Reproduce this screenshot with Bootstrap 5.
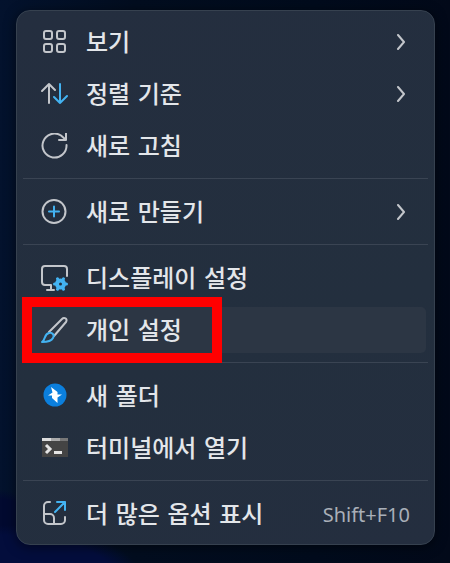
<!DOCTYPE html>
<html lang="ko">
<head>
<meta charset="utf-8">
<meta name="viewport" content="width=device-width, initial-scale=1">
<title>바탕 화면 메뉴</title>
<link href="https://cdn.jsdelivr.net/npm/bootstrap@5.3.0/dist/css/bootstrap.min.css" rel="stylesheet">
<style>
  body {
    background:
      radial-gradient(ellipse 140px 50px at 0 575px, #030d3c 0 80%, transparent 100%),
      radial-gradient(ellipse 60px 90px at 0 580px, #020a30 0 90%, transparent 100%),
      linear-gradient(90deg, #03122d 0, #020d1f 30%, #010b1c 70%, #020919 100%);
    min-height: 100vh;
    font-family: "DejaVu Sans", "Noto Sans CJK KR", sans-serif;
  }
  .desktop { padding: 10px 15px 18px 16px; }
  .context-menu {
    background: linear-gradient(165deg, #242e3f, #232f3e 60%, #242e3f);
    border: 1px solid #36414f;
    border-radius: 14px;
    padding: 5px 6px 4px;
    box-shadow: 0 2px 12px #00000080;
  }
  .menu-item {
    height: 46px;
    margin: 3px 2px;
    padding: 2px 16px 0 15px;
    border: 0;
    border-radius: 5px;
    background: transparent;
    color: #e3e6ea;
    font-size: 24px;
    line-height: 32px;
    font-weight: 500;
    gap: 18px;
  }
  .menu-item:hover, .menu-item.current { background: #2c3644; }
  .menu-item svg { width: 28px; height: 28px; flex: none; fill: none; stroke: #c3c6cb; stroke-width: 2; stroke-linecap: round; stroke-linejoin: round; }
  .menu-item svg.chevron { width: 12px; height: 18px; margin-right: 3px; }
  .menu-item .accent { stroke: #43b3f2; }
  .menu-line { margin: 6px 0 7px; border-color: #3a4453; opacity: 1; }
  .shortcut { font-family: "Noto Sans", sans-serif; font-size: 20px; font-weight: 400; color: #a9afb8; }
  .marker { inset: -10px auto -10px -3px; width: 200px; border: 10px solid #f00; pointer-events: none; }
</style>
</head>
<body>
<main class="desktop">
  <div class="context-menu d-flex flex-column" role="menu">
    <button type="button" role="menuitem" class="menu-item d-flex align-items-center text-start">
      <svg viewBox="0 0 28 28"><rect x="4" y="2" width="8" height="8" rx="2"/><rect x="17" y="2" width="8" height="8" rx="2"/><rect x="4" y="15" width="8" height="8" rx="2"/><rect x="17" y="15" width="8" height="8" rx="2"/></svg>
      <span class="flex-grow-1">보기</span>
      <svg class="chevron" viewBox="0 0 12 18"><path d="M3 1l6 7-6 7"/></svg>
    </button>
    <button type="button" role="menuitem" class="menu-item d-flex align-items-center text-start">
      <svg viewBox="0 0 28 28"><path d="M9 22V3M2 10l7-7 6 6"/><path class="accent" d="M20 3v19M14 16l6 6 7-7"/></svg>
      <span class="flex-grow-1">정렬 기준</span>
      <svg class="chevron" viewBox="0 0 12 18"><path d="M3 1l6 7-6 7"/></svg>
    </button>
    <button type="button" role="menuitem" class="menu-item d-flex align-items-center text-start">
      <svg viewBox="0 0 28 28"><path d="M26.500 12A12 12 0 1 1 21 2.500L25 6M26 0v7h-7"/></svg>
      <span class="flex-grow-1">새로 고침</span>
    </button>
    <hr class="menu-line">
    <button type="button" role="menuitem" class="menu-item d-flex align-items-center text-start">
      <svg viewBox="0 0 28 28"><circle cx="14" cy="12.500" r="11.500"/><path class="accent" d="M14 7.500v10M9 12.500h10"/></svg>
      <span class="flex-grow-1">새로 만들기</span>
      <svg class="chevron" viewBox="0 0 12 18"><path d="M3 1l6 7-6 7"/></svg>
    </button>
    <hr class="menu-line">
    <button type="button" role="menuitem" class="menu-item d-flex align-items-center text-start">
      <svg viewBox="0 0 28 28"><path d="M27 11V4a3 3 0 0 0-3-3H5a3 3 0 0 0-3 3v13a3 3 0 0 0 3 3h6M11 20v5M7 25h7"/><circle class="accent" cx="20.500" cy="19" r="3.500" stroke-width="4"/><path class="accent" stroke-width="3" d="M14.500 19h1M25.500 19h1M17.500 13.800l.5.900M23.500 13.800l-.5.900M17.500 24.200l.5-.9M23.500 24.200l-.5-.9"/></svg>
      <span class="flex-grow-1">디스플레이 설정</span>
    </button>
    <button type="button" role="menuitem" class="menu-item current position-relative d-flex align-items-center text-start">
      <svg viewBox="0 0 28 28"><path d="M9 15L22 2c2-2 6-.5 4 3L14 19"/><path class="accent" d="M9 16c3-1 6 2 4 5-2 4-7 4-11 4 4-3 2-8 7-9z"/></svg>
      <span class="flex-grow-1">개인 설정</span>
      <span class="marker position-absolute"></span>
    </button>
    <hr class="menu-line">
    <button type="button" role="menuitem" class="menu-item d-flex align-items-center text-start">
      <svg viewBox="0 0 28 28"><circle cx="15" cy="12" r="11.500" fill="#0b7fdd" stroke="none"/><path d="M11 4l6.500 5v2.500h4.500L17.500 14.500V20L12 15v-2.500H8L12.500 9.500z" fill="#fff" stroke="none"/></svg>
      <span class="flex-grow-1">새 폴더</span>
    </button>
    <button type="button" role="menuitem" class="menu-item d-flex align-items-center text-start">
      <svg viewBox="0 0 28 28"><g stroke="none"><path fill="#444" d="M2 3h26v19H2z"/><path fill="#777" d="M2 3h26v3H2z"/><path fill="#ddd" d="M2 3h9v3H2z"/><path fill="#aaa" d="M11 3h9v3h-9z"/></g><path d="M6 10l4 4-4 4M14 17.500h8" stroke="#e4e4e4" stroke-width="3" stroke-linecap="butt" stroke-linejoin="miter"/></svg>
      <span class="flex-grow-1">터미널에서 열기</span>
    </button>
    <hr class="menu-line">
    <button type="button" role="menuitem" class="menu-item d-flex align-items-center text-start">
      <svg viewBox="0 0 28 28"><path d="M10 1H8a4 4 0 0 0-4 4v14a4 4 0 0 0 4 4h13a4 4 0 0 0 4-4v-3M4 13h6a4 4 0 0 1 4 4v6"/><path class="accent" d="M17 1h8v8M25 1L15 11"/></svg>
      <span class="flex-grow-1">더 많은 옵션 표시</span>
      <span class="shortcut">Shift+F10</span>
    </button>
  </div>
</main>
<script src="https://cdn.jsdelivr.net/npm/bootstrap@5.3.0/dist/js/bootstrap.bundle.min.js"></script>
</body>
</html>
